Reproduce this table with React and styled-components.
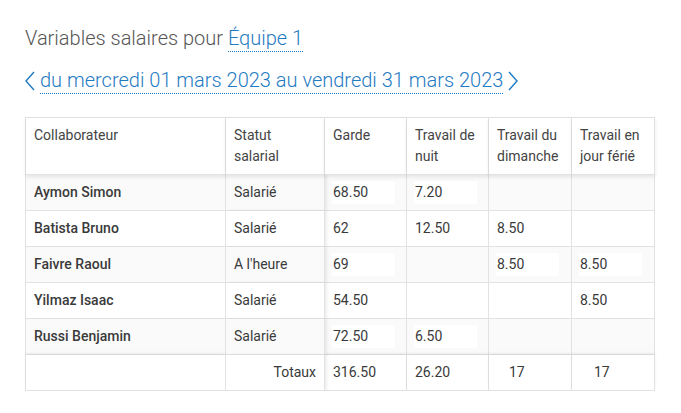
import React from 'react';
import styled, { createGlobalStyle } from 'styled-components';

const GlobalStyle = createGlobalStyle`
  body {
    margin: 0;
    background: #fff;
    font-family: Roboto, "Liberation Sans", sans-serif;
    color: #333;
  }
`;

const Page = styled.div`
  padding: 26px 25px 0;
`;

const Title = styled.h1`
  margin: 0;
  font-size: 20px;
  line-height: 24px;
  font-weight: 300;
  color: #555;
`;

const Link = styled.span`
  color: #1f7bc2;
  border-bottom: 1px dotted #1f7bc2;
  padding-bottom: 1px;
`;

const Period = styled.div`
  display: flex;
  align-items: center;
  margin-top: 18px;
  font-size: 20px;
  line-height: 24px;
  font-weight: 300;
  color: #1f7bc2;
`;

const Arrow = styled.svg`
  width: 10px;
  height: 20px;
  flex: none;
  margin: ${(p) => (p.$side === 'left' ? '0 5px 0 0' : '0 0 0 5px')};
`;

const Grid = styled.div`
  margin-top: 23px;
  display: grid;
  grid-template-columns: 200px 99px 82px 82px 83px 83px;
  width: 629px;
  border-left: 1px solid #e2e2e2;
  border-top: 1px solid #e2e2e2;
  font-size: 14px;
`;

const Cell = styled.div`
  position: relative;
  box-sizing: border-box;
  height: ${(p) => (p.$head ? '57px' : '36px')};
  padding: ${(p) => (p.$head ? '7px 8px 0' : '0 8px')};
  display: flex;
  align-items: ${(p) => (p.$head ? 'flex-start' : 'center')};
  justify-content: ${(p) => (p.$right ? 'flex-end' : 'flex-start')};
  line-height: 21px;
  border-right: 1px solid #e2e2e2;
  border-bottom: 1px solid #e2e2e2;
  background: ${(p) => (p.$striped ? '#fafafa' : '#fff')};
  color: ${(p) => (p.$head ? '#444' : '#3a3a3a')};
  font-weight: ${(p) => (p.$bold ? 500 : 400)};
  z-index: ${(p) => (p.$head ? 3 : p.$pinned ? 2 : p.$foot ? 1 : 0)};
  box-shadow: ${(p) =>
    p.$head
      ? '0 2px 4px rgba(0, 0, 0, 0.09)'
      : p.$pinned
      ? '2px 0 3px rgba(0, 0, 0, 0.07)'
      : p.$foot
      ? '0 -2px 3px rgba(0, 0, 0, 0.06)'
      : 'none'};
`;

const Entry = styled.span`
  display: block;
  width: 62px;
  height: 23px;
  line-height: 23px;
  margin-left: -1px;
  padding-left: ${(p) => p.$indent || 1}px;
  background: #fff;
  color: #3a3a3a;
`;

const headers = [
  'Collaborateur',
  'Statut salarial',
  'Garde',
  'Travail de nuit',
  'Travail du dimanche',
  'Travail en jour férié',
];

const rows = [
  { name: 'Aymon Simon', status: 'Salarié', values: ['68.50', '7.20', '', ''] },
  { name: 'Batista Bruno', status: 'Salarié', values: ['62', '12.50', '8.50', ''] },
  { name: 'Faivre Raoul', status: "A l'heure", values: ['69', '', '8.50', '8.50'] },
  { name: 'Yilmaz Isaac', status: 'Salarié', values: ['54.50', '', '', '8.50'] },
  { name: 'Russi Benjamin', status: 'Salarié', values: ['72.50', '6.50', '', ''] },
];

const totals = [
  { value: '316.50', indent: 1 },
  { value: '26.20', indent: 1 },
  { value: '17', indent: 13 },
  { value: '17', indent: 15 },
];

const Chevron = ({ side }) => (
  <Arrow $side={side} viewBox="0 0 10 20">
    <polyline
      points={side === 'left' ? '9,1 1,10 9,19' : '1,1 9,10 1,19'}
      fill="none"
      stroke="#1f7bc2"
      strokeWidth="1.4"
    />
  </Arrow>
);

export default function App() {
  return (
    <Page>
      <GlobalStyle />
      <Title>
        Variables salaires pour <Link>Équipe 1</Link>
      </Title>
      <Period>
        <Chevron side="left" />
        <Link>du mercredi 01 mars 2023 au vendredi 31 mars 2023</Link>
        <Chevron side="right" />
      </Period>
      <Grid>
        {headers.map((h) => (
          <Cell key={h} $head>
            {h}
          </Cell>
        ))}
        {rows.map((r, ri) => {
          const striped = ri % 2 === 0;
          return (
            <React.Fragment key={r.name}>
              <Cell $striped={striped} $bold>
                {r.name}
              </Cell>
              <Cell $striped={striped} $pinned>
                {r.status}
              </Cell>
              {r.values.map((v, vi) => (
                <Cell key={vi} $striped={striped}>
                  {v && <Entry>{v}</Entry>}
                </Cell>
              ))}
            </React.Fragment>
          );
        })}
        <Cell $foot />
        <Cell $foot $pinned $right>
          Totaux
        </Cell>
        {totals.map((t, i) => (
          <Cell key={i} $foot>
            <Entry $indent={t.indent}>{t.value}</Entry>
          </Cell>
        ))}
      </Grid>
    </Page>
  );
}
